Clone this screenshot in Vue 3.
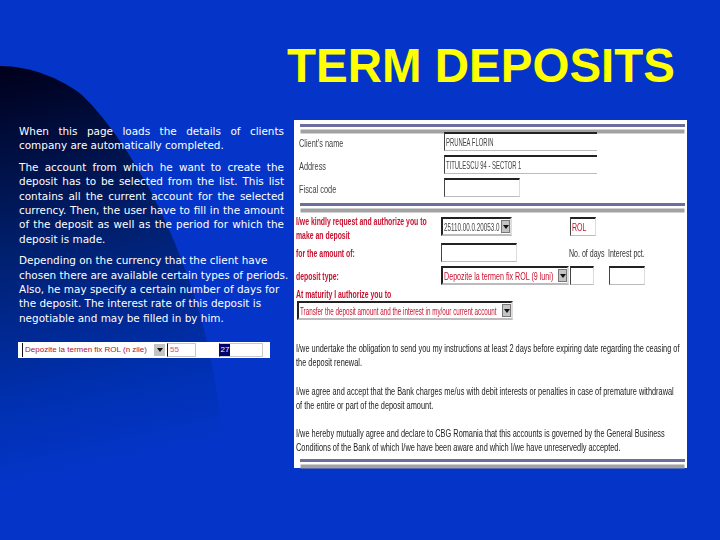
<script setup>
const paragraphs = [
  { gap: false, lines: [
    { t: 'When this page loads the details of clients', j: true },
    { t: 'company are automatically completed.', j: false },
  ]},
  { gap: true, lines: [
    { t: 'The account from which he want to create the', j: true },
    { t: 'deposit has to be selected from the list. This list', j: true },
    { t: 'contains all the current account for the selected', j: true },
    { t: 'currency. Then, the user have to fill in the amount', j: true },
    { t: 'of the deposit as well as the period for which the', j: true },
    { t: 'deposit is made.', j: false },
  ]},
  { gap: true, lines: [
    { t: 'Depending on the currency that the client have', j: false },
    { t: 'chosen there are available certain types of periods.', j: false },
    { t: 'Also, he may specify a certain number of days for', j: false },
    { t: 'the deposit. The interest rate of this deposit is', j: false },
    { t: 'negotiable and may be filled in by him.', j: false },
  ]},
]
const notes = [
  ['I/we undertake the obligation to send you my instructions at least 2 days before expiring date regarding the ceasing of', 'the deposit renewal.'],
  ['I/we agree and accept that the Bank charges me/us with debit interests or penalties in case of premature withdrawal', 'of the entire or part of the deposit amount.'],
  ['I/we hereby mutually agree and declare to CBG Romania that this accounts is governed by the General Business', 'Conditions of the Bank of which I/we have been aware and which I/we have unreservedly accepted.'],
]
</script>

<template>
  <div class="slide">
    <svg class="swoosh" width="720" height="540" viewBox="0 0 720 540" aria-hidden="true">
      <defs>
        <linearGradient id="dark" x1="0" y1="66" x2="90" y2="470" gradientUnits="userSpaceOnUse">
          <stop offset="0" stop-color="#00001a" />
          <stop offset="0.45" stop-color="#00206f" />
          <stop offset="0.8" stop-color="#0030b0" />
          <stop offset="1" stop-color="#0435c8" />
        </linearGradient>
      </defs>
      <path d="M0 66 C30 66 60 78 82 95 C110 122 132 158 150 190 C175 238 195 290 208 345 C216 385 224 430 232 500 L0 500 Z" fill="url(#dark)" />
    </svg>

    <h1 class="title">TERM DEPOSITS</h1>

    <div class="content">
      <div class="left">
        <div v-for="(p, i) in paragraphs" :key="i" class="para" :class="{ gap: p.gap }">
          <div v-for="l in p.lines" :key="l.t" class="line" :class="{ just: l.j }">{{ l.t }}</div>
        </div>

        <div class="strip">
          <div class="mini-select">
            <span class="mini-text">Depozite la termen fix ROL (n zile)</span>
            <span class="mini-arrow"><i class="tri"></i></span>
          </div>
          <div class="mini-input w1"><span class="pink">55</span></div>
          <div class="mini-input w2"><span class="sel">27</span></div>
        </div>
      </div>

      <div class="panel">
        <div class="rule"></div>

        <div class="row r-name">
          <div class="lab gray"><span class="sq">Client's name</span></div>
          <div class="inp w-long"><span class="sq caps">PRUNEA FLORIN</span></div>
        </div>
        <div class="row">
          <div class="lab gray"><span class="sq">Address</span></div>
          <div class="inp w-long"><span class="sq caps">TITULESCU 94 - SECTOR 1</span></div>
        </div>
        <div class="row">
          <div class="lab gray"><span class="sq">Fiscal code</span></div>
          <div class="inp w-fisc"></div>
        </div>

        <div class="rule r2"></div>

        <div class="row2 first">
          <div class="lab2 red two"><span class="sq tight">I/we kindly request and authorize you to</span><span class="sq tight">make an deposit</span></div>
          <div class="inp sel-box w-acc"><span class="sq acc">25110.00.0.20053.0</span><span class="arrow"><i class="tri"></i></span></div>
          <div class="inp w-rol red-n"><span class="sq">ROL</span></div>
        </div>
        <div class="row2 second">
          <div class="lab2 red"><span class="sq tight">for the amount of:</span></div>
          <div class="inp w-amt"></div>
          <div class="cap c1"><span class="sq">No. of days</span></div>
          <div class="cap c2"><span class="sq">Interest pct.</span></div>
        </div>
        <div class="row2 third">
          <div class="lab2 red"><span class="sq tight">deposit type:</span></div>
          <div class="inp sel-box w-type red-n"><span class="sq wide">Depozite la termen fix ROL (9 luni)</span><span class="arrow"><i class="tri"></i></span></div>
          <div class="inp w-days"></div>
          <div class="inp w-pct"></div>
        </div>
        <div class="mat red"><span class="sq tight">At maturity I authorize you to</span></div>
        <div class="inp sel-box w-mat red-n"><span class="sq acc">Transfer the deposit amount and the interest in my/our current account</span><span class="arrow"><i class="tri"></i></span></div>

        <div class="notes">
          <p v-for="n in notes" :key="n[0]" class="note">
            <span class="sq">{{ n[0] }}</span>
            <span class="sq">{{ n[1] }}</span>
          </p>
        </div>

        <div class="rule r3"></div>
      </div>
    </div>
  </div>
</template>

<style>
html, body { margin: 0; background: #0435c8; }
</style>

<style scoped>
.slide {
  position: relative;
  width: 720px;
  height: 540px;
  overflow: hidden;
  background: #0435c8;
  font-family: "Liberation Sans", Arial, sans-serif;
}
.swoosh { position: absolute; left: 0; top: 0; }
.title {
  position: relative;
  margin: 0;
  padding: 38px 45px 0 0;
  height: 82px;
  box-sizing: border-box;
  text-align: right;
  color: #ffff00;
  font-size: 47.5px;
  line-height: 56px;
  font-weight: 700;
}
.content {
  position: relative;
  display: flex;
  align-items: flex-start;
  padding: 38px 0 0 19px;
}
.left { width: 265px; margin-right: 10px; color: #fff; font-family: "DejaVu Sans", sans-serif; font-size: 10.45px; line-height: 14.4px; margin-top: 4px; }
.para.gap { margin-top: 7px; }
.line { white-space: nowrap; }
.line.just { white-space: normal; text-align: justify; text-align-last: justify; }

.strip {
  display: flex;
  align-items: center;
  width: 252px;
  height: 16px;
  margin: 17px 0 0 -1px;
  background: #fff;
  box-sizing: border-box;
  padding-left: 4px;
  font-family: "Liberation Sans", Arial, sans-serif;
}
.mini-select {
  display: flex;
  align-items: center;
  justify-content: space-between;
  width: 143px;
  height: 14px;
  border-left: 1px solid #111;
  box-sizing: border-box;
}
.mini-text { color: #b01030; font-size: 8px; white-space: nowrap; padding-left: 2px; }
.mini-arrow { flex: none; display: flex; align-items: center; justify-content: center; width: 11px; height: 12px; background: #c4c4c4; }
.mini-input { height: 14px; box-sizing: border-box; border: 1px solid #c8c8c8; border-left: 1px solid #111; display: flex; align-items: center; font-size: 8px; }
.w1 { width: 29px; margin-left: 2px; padding-left: 2px; }
.w2 { width: 44px; margin-left: 23px; }
.pink { color: #d05070; }
.sel { background: #00006e; color: #fff; width: 10px; height: 12px; line-height: 12px; text-align: center; }

.panel {
  flex: none;
  width: 393px;
  height: 348px;
  box-sizing: border-box;
  padding: 4px 2px 0;
  background: #fff;
  color: #333;
  font-size: 11px;
  filter: blur(0.45px);
}
.rule {
  height: 3px;
  margin: 0 0 0 4px;
  background: #6d6d9e;
  border-bottom: 2px solid #fff;
  box-shadow: 0 5px 0 -0.5px #a2a2a2;
  width: 385px;
}
.r2 { margin-top: 6px; }
.r3 { margin-top: 5px; }
.sq { display: block; width: 100%; transform: scaleX(0.67); transform-origin: left center; white-space: nowrap; }
.sq.caps { transform: scaleX(0.56); }
.sq.tight { transform: scaleX(0.655); }
.sq.acc { transform: scaleX(0.6); }
.sq.wide { transform: scaleX(0.68); }
.row { display: flex; align-items: center; height: 19px; margin-top: 4px; }
.r-name { margin-top: 3px; }
.lab { width: 148px; flex: none; padding: 3px 0 0 3px; box-sizing: border-box; }
.gray { color: #444; }
.inp {
  box-sizing: border-box;
  display: flex;
  align-items: center;
  height: 19px;
  background: #fff;
  border-top: 2px solid #222;
  border-left: 1px solid #444;
  border-bottom: 1px solid #bbb;
  border-right: 1px solid #ddd;
  padding-left: 1px;
  flex: none;
  color: #444;
  font-size: 10.5px;
}
.inp .sq { flex: 1 1 0; width: 0; }
.w-long { width: 153px; border-right: 0; }
.w-fisc { width: 76px; }

.row2 { display: flex; align-items: center; }
.first { height: 26px; margin-top: 9px; align-items: flex-start; }
.second { height: 19px; margin-top: 0; }
.third { height: 19px; margin-top: 4px; }
.red { color: #c8102e; font-weight: 700; }
.lab2 { width: 145px; flex: none; font-size: 10.5px; line-height: 14px; }
.two { margin-top: -3px; }
.red-n { color: #c8102e; }
.sel-box { border: 2px solid #222; border-right-color: #ddd; border-bottom-color: #bbb; justify-content: space-between; }
.arrow { position: relative; flex: none; display: flex; align-items: center; justify-content: center; width: 9px; height: 13px; background: #c4c4c4; border: 1px solid #777; box-sizing: border-box; }
.tri { display: block; width: 0; height: 0; border-left: 3px solid transparent; border-right: 3px solid transparent; border-top: 4px solid #111; }
.w-acc { width: 71px; }
.w-rol { width: 26px; margin-left: 58px; }
.w-amt { width: 76px; }
.cap { font-size: 10.5px; color: #333; flex: none; }
.c1 { width: 39px; margin-left: 52px; }
.c2 { width: 46px; }
.w-type { width: 128px; }
.w-days { width: 24px; margin-left: 1px; }
.w-pct { width: 36px; margin-left: 15px; }
.mat { font-size: 10.5px; line-height: 14px; margin-top: 2px; }
.w-mat { width: 216px; margin: 0 0 0 1px; }
.notes { margin-top: 21px; color: #222; font-size: 11px; line-height: 14px; }
.note { margin: 0 0 14.5px; }
.notes .note:last-child { margin-bottom: 0; }
</style>
